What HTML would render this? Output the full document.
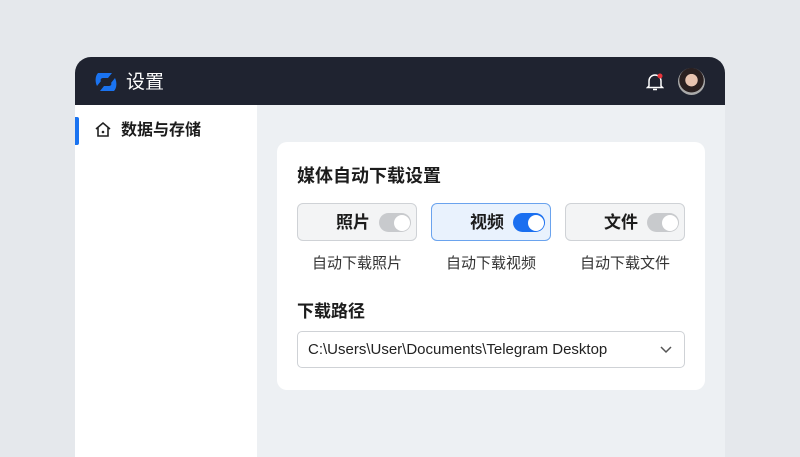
<!DOCTYPE html>
<html><head><meta charset="utf-8"><style>
*{margin:0;padding:0;box-sizing:border-box}
body{width:800px;height:450px;overflow:hidden;background:#e5e8ec;font-family:"Liberation Sans","Noto Sans CJK SC",sans-serif;position:relative}
.win{position:absolute;left:75px;top:57px;width:650px;height:400px;background:#edf0f3;border-radius:16px 16px 0 0;overflow:hidden}
.hdr{position:absolute;left:0;top:0;width:650px;height:48px;background:#1f2330}
.title{position:absolute;left:51px;top:13px;color:#fff;font-size:19px;line-height:26px}
.side{position:absolute;left:0;top:48px;width:182px;height:360px;background:#fff}
.ind{position:absolute;left:0;top:12px;width:4px;height:28px;background:#1a73f0;border-radius:0 2px 2px 0}
.nav{position:absolute;left:46px;top:15px;font-size:16px;line-height:22px;font-weight:bold;color:#1c1c1c}
.card{position:absolute;left:202px;top:85px;width:428px;height:248px;background:#fff;border-radius:10px}
.h{position:absolute;font-size:18px;font-weight:bold;color:#1c1c1c;line-height:24px}
.btn{position:absolute;top:61px;width:120px;height:38px;border:1px solid #cfd2d6;border-radius:6px;background:#f3f4f5}
.btn.on{background:#e9f2fd;border-color:#6aa3ee}
.btn span{position:absolute;right:46px;top:1px;line-height:36px;font-size:17px;font-weight:bold;color:#1c1c1c}
.tg{position:absolute;right:5px;top:9px;width:32px;height:19px;border-radius:10px;background:#c8cacd}
.tg i{position:absolute;right:1.5px;top:1.5px;width:16px;height:16px;border-radius:50%;background:#fff}
.on .tg{background:#1a6ff0}
.lb{position:absolute;top:111px;width:120px;text-align:center;font-size:15px;line-height:22px;color:#333}
.sel{position:absolute;left:20px;top:189px;width:388px;height:37px;border:1px solid #cfd2d6;border-radius:5px;font-size:15px;line-height:36px;color:#222;padding:0 0 0 10px}
</style></head><body>
<div class="win">
 <div class="hdr">
  <svg style="position:absolute;left:19px;top:13px" width="24" height="24" viewBox="0 0 24 24"><path d="M4 3h14l-4 5H9c-2 0-3 2-2 3L3 16C1 12 1 6 4 3z" fill="#1a73f0"/><path d="M20 21H6l4-5h5c2 0 3-2 2-3l4-5c2 4 2 10-1 13z" fill="#1a73f0"/></svg>
  <div class="title">设置</div>
  <svg style="position:absolute;left:571px;top:15px" width="18" height="19" viewBox="0 0 18 19"><path d="M3 14V9a6 6 0 0 1 12 0v5l1.5 1.5h-15z" fill="none" stroke="#fff" stroke-width="1.5"/><path d="M7 17.5h4" stroke="#fff" stroke-width="1.5"/><circle cx="14" cy="4" r="2.5" fill="#e8343b"/></svg>
  <div style="position:absolute;left:603px;top:11px;width:27px;height:27px;border-radius:50%;background:radial-gradient(circle at 50% 45%,#e8c4b0 0 30%,#2a2020 32% 60%,#aaa 62%)"></div>
 </div>
 <div class="side"><div class="ind"></div>
  <svg style="position:absolute;left:19px;top:16px" width="18" height="17" viewBox="0 0 18 17"><path d="M2 8L9 2l7 6M4 6.5V15h10V6.5" fill="none" stroke="#222" stroke-width="1.6"/><circle cx="9" cy="11" r="1.3" fill="#222"/></svg>
  <div class="nav">数据与存储</div></div>
 <div class="card">
  <div class="h" style="left:20px;top:22px">媒体自动下载设置</div>
  <div class="btn" style="left:20px"><span>照片</span><div class="tg"><i></i></div></div>
  <div class="btn on" style="left:154px"><span>视频</span><div class="tg"><i></i></div></div>
  <div class="btn" style="left:288px"><span>文件</span><div class="tg"><i></i></div></div>
  <div class="lb" style="left:20px">自动下载照片</div>
  <div class="lb" style="left:154px">自动下载视频</div>
  <div class="lb" style="left:288px">自动下载文件</div>
  <div class="h" style="left:20px;top:158px;font-size:17px">下载路径</div>
  <div class="sel">C:\Users\User\Documents\Telegram Desktop
   <svg style="position:absolute;right:12px;top:14px" width="12" height="8" viewBox="0 0 12 8"><path d="M1 1l5 5 5-5" fill="none" stroke="#555" stroke-width="1.5"/></svg></div>
 </div>
</div>
</body></html>
